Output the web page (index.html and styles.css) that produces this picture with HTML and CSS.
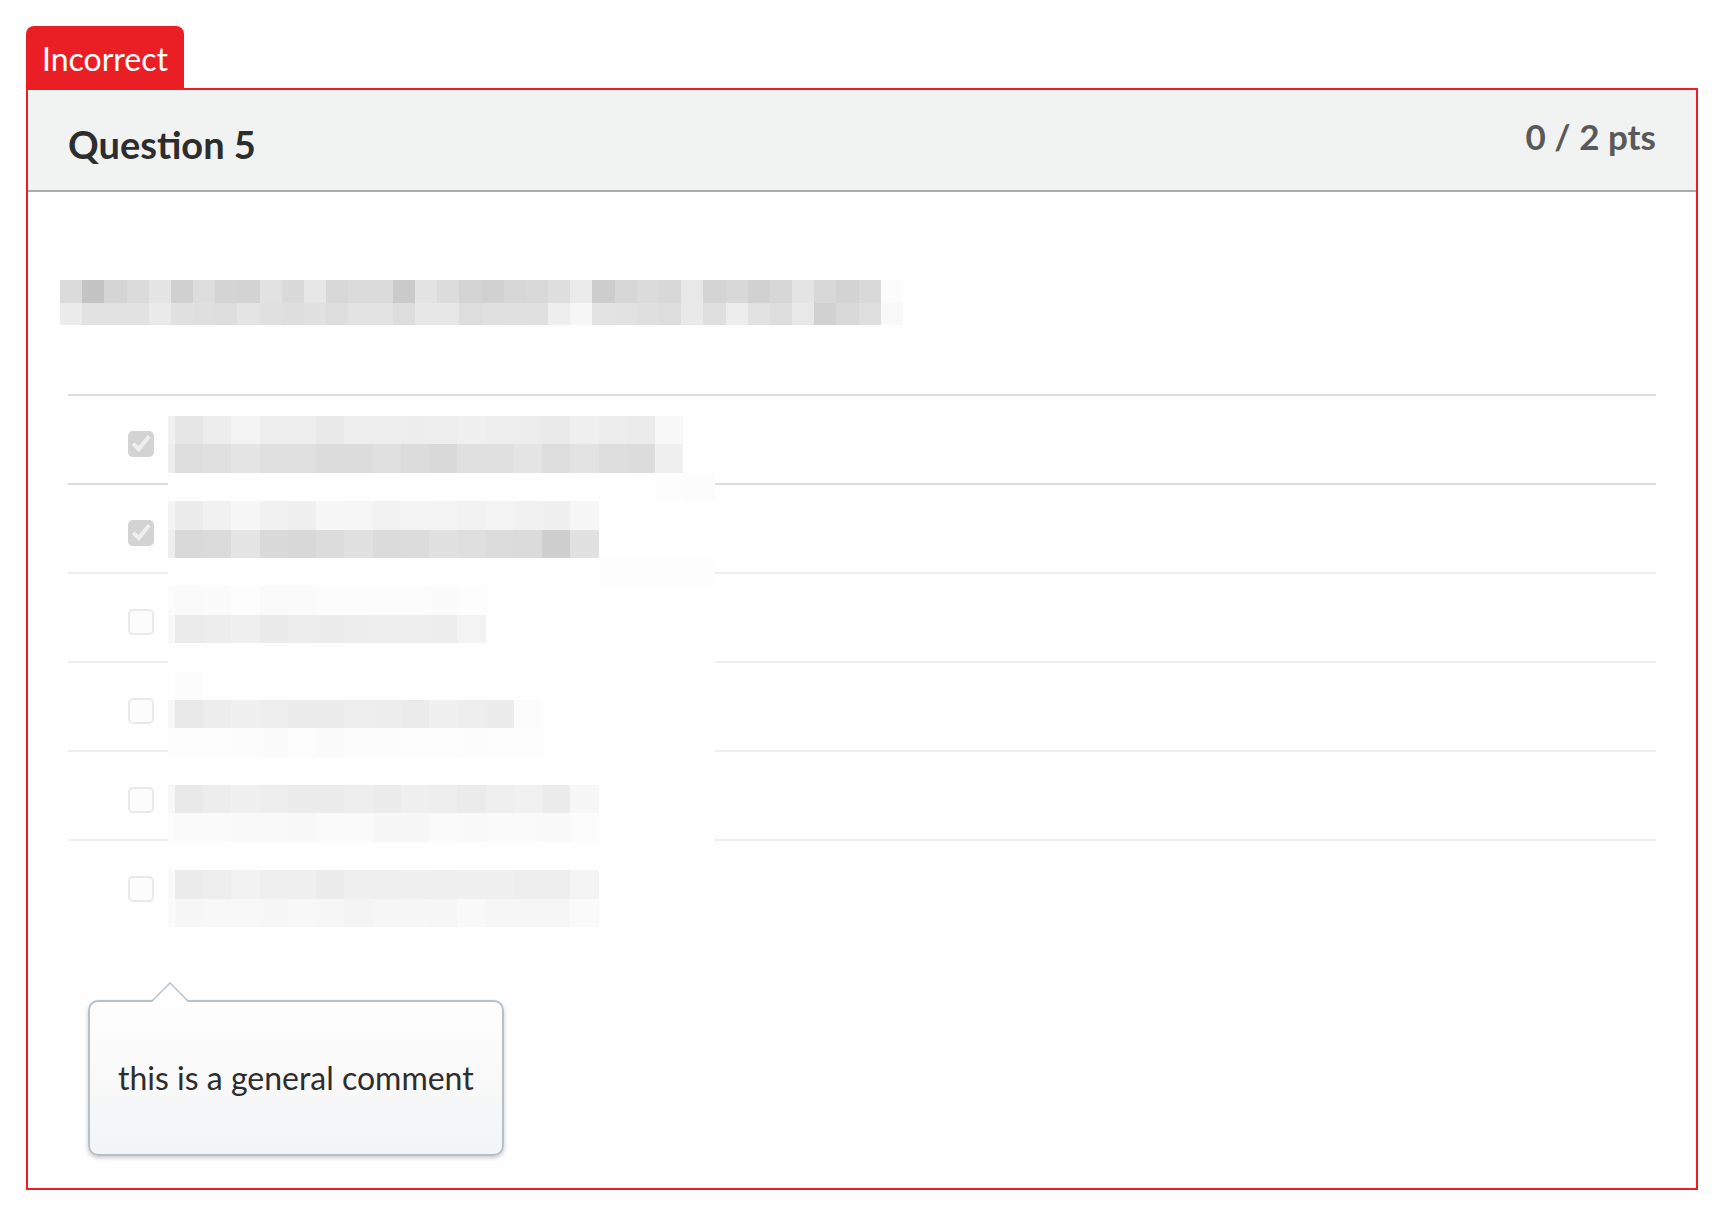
FILE: index.html
```
<!DOCTYPE html>
<html lang="en">
<head>
  <meta charset="UTF-8" />
  <meta name="viewport" content="width=device-width, initial-scale=1.0" />
  <title>Question 5</title>
  <link rel="stylesheet" href="styles.css">
</head>
<body>
  <div class="flag">Incorrect</div>
  <section class="question">
    <header class="question-header">
      <h2 class="question-name">Question 5</h2>
      <div class="question-points">0 / 2 pts</div>
    </header>

    <div class="question-body">
      <svg class="redacted-text" id="redactedText"></svg>

      <div class="answers">
        <div class="answer selected"><input type="checkbox" aria-label="Answer 1" checked disabled></div>
        <div class="answer selected"><input type="checkbox" aria-label="Answer 2" checked disabled></div>
        <div class="answer"><input type="checkbox" aria-label="Answer 3" disabled></div>
        <div class="answer"><input type="checkbox" aria-label="Answer 4" disabled></div>
        <div class="answer"><input type="checkbox" aria-label="Answer 5" disabled></div>
        <div class="answer"><input type="checkbox" aria-label="Answer 6" disabled></div>
        <svg class="redacted-answers" id="redactedAnswers"></svg>
      </div>

      <div class="comment">
        <svg class="comment-arrow" viewBox="0 0 38 20">
          <path d="M1 20 L19 1 L37 20 Z" fill="#fefefe"/>
          <path d="M1 19 L19 1 L37 19" fill="none" stroke="#b4c0ca" stroke-width="1.4"/>
        </svg>
        <p>this is a general comment</p>
      </div>
    </div>
  </section>

  <script src="script.js"></script>
</body>
</html>
```
FILE: styles.css
```
* { box-sizing: border-box; }

body {
  margin: 0;
  padding: 26px 27px 25px 26px;
  background: #fefefe;
  color: #2d2d2d;
  font-family: Lato, "Liberation Sans", sans-serif;
  font-size: 32px;
}

.flag {
  width: fit-content;
  height: 62px;
  padding: 0 16px;
  line-height: 66px;
  background: #e91f25;
  color: #fff;
  border-radius: 8px 8px 0 0;
}

.question {
  border: 2px solid #e91f25;
}

.question-header {
  display: flex;
  justify-content: space-between;
  align-items: flex-start;
  height: 102px;
  padding: 22px 40px 0;
  background: #f1f3f2;
  border-bottom: 2px solid #a9abaa;
}

.question-name {
  margin: 8px 0 0;
  font-size: 38px;
  line-height: 48px;
  font-weight: 700;
}

.question-points {
  font-size: 35px;
  line-height: 48px;
  font-weight: 700;
  color: #595959;
}

.question-body {
  padding: 88px 40px 32px;
}

.redacted-text {
  display: block;
  width: 843px;
  height: 45px;
  margin: 0 0 69px -8px;
}

.answers {
  position: relative;
}

.answer {
  display: flex;
  padding: 35px 60px 26px;
  border-top: 2px solid #eee;
}

.answer.selected {
  border-top-color: #ddd;
}

input[type="checkbox"] {
  appearance: none;
  width: 26px;
  height: 26px;
  margin: 0;
  border: 2px solid #e9e9e9;
  border-radius: 5px;
  background: #fcfcfc;
}

input[type="checkbox"]:checked {
  border: none;
  background: #d3d3d3;
}

input[type="checkbox"]:checked::before {
  content: "";
  display: block;
  width: 26px;
  height: 26px;
  background: #efefef;
  clip-path: polygon(15% 54%, 25% 43%, 40% 58%, 76% 15%, 87% 25%, 42% 82%);
}

/* lies over the answer rows and hides their separators */
.redacted-answers {
  position: absolute;
  top: 22px;
  left: 100px;
  width: 547px;
  height: 511px;
}

.comment {
  position: relative;
  width: fit-content;
  margin: 72px 0 0 20px;
  padding: 58px 28px;
  background: linear-gradient(#fefefe, #f9f9f9 50%, #f2f4f7);
  border: 2px solid #b4c0ca;
  border-radius: 10px;
  box-shadow: 0 2px 4px rgba(0, 0, 0, 0.2);
}

.comment p {
  margin: 0;
  line-height: 36px;
}

.comment-arrow {
  position: absolute;
  top: -20px;
  left: 61px;
  width: 38px;
  height: 20px;
}
```
FILE: script.js
```
// One hex byte per cell: the grey level of that block.
const textRows = [
  'DB C4 D5 DB E5 D0 DD D4 D3 E2 DA E7 D8 DB DB CA E3 DC D4 D1 D7 D9 DE EB CD D7 DB D8 E8 D4 D8 D1 D7 E4 D8 D3 D9 FC',
  'EC E2 E2 E2 EA E1 DF DD E4 E0 DE E1 DD E3 E3 DD E7 E7 DD E0 E1 E0 EE F6 E3 E2 DF DD E9 DF ED E2 DD E8 D1 D9 DF F9'
];

const answerRows = [
  'F1 E6 ED F3 EE EE E8 EE EE ED EE F0 EE ED EA EF ED EB F8',
  'EE DE E0 E5 E0 E0 DC DC E0 DC D9 E0 E0 E5 DE E3 DE DC F0',
  'FE FE FE FE FE FE FE FE FE FE FE FE FE FE FE FE FE FE FD FC',
  'F4 EC F1 F7 F1 F0 F7 F6 F2 F3 F4 F2 F4 F1 F0 F7',
  'EE D9 DB E5 DA D8 DC E1 DB DC E1 DF DC DB CF E1',
  'FE FE FE FE FE FE FE FE FE FE FE FE FE FE FE FE FD FD FD FD',
  'FC FA FB FD FA FA FC FC FC FC FB FD',
  'F8 EB ED F0 EA ED EC ED EE EE ED F3 FE',
  '',
  'FE FC',
  'F7 E9 ED F0 EE EC EC EE ED EB F0 EE EC FC',
  'FD FD FD FC FB FD FB FC FC FD FD FC FD FD',
  '',
  'F7 E9 ED F0 EE EC EC EE EC EF EE EB EF F1 EC F7',
  'FC FA FA F9 F9 F8 FA FA F7 F7 FA F9 FA FA F9 FC',
  '',
  'F9 EC EE F2 EF EF EC EF EF F0 EF F0 F0 EE EE F4',
  'FB F7 F8 F8 F7 F8 F7 F4 F6 F7 F6 F9 F6 F6 F6 FA'
];

// The first column may be cut off, so it has a width of its own.
function drawBlocks(id, rows, width, height, cell, first) {
  const rowHeight = height / rows.length;
  let rects = `<rect width="${width}" height="${height}" fill="#fefefe"/>`;

  rows.forEach((row, r) => {
    const y = Math.round(r * rowHeight);
    const bottom = Math.round((r + 1) * rowHeight);
    row.split(' ').filter(Boolean).forEach((grey, c) => {
      const x = c === 0 ? 0 : Math.round(first + (c - 1) * cell);
      const right = c === 19 && first < cell ? width : Math.round(first + c * cell);
      rects += `<rect x="${x}" y="${y}" width="${right - x}" height="${bottom - y}" fill="#${grey}${grey}${grey}"/>`;
    });
  });

  const svg = document.getElementById(id);
  svg.setAttribute('viewBox', `0 0 ${width} ${height}`);
  svg.innerHTML = rects;
}

drawBlocks('redactedText', textRows, 843, 45, 843 / 38, 843 / 38);
drawBlocks('redactedAnswers', answerRows, 547, 511, 28.24, 7);
```
